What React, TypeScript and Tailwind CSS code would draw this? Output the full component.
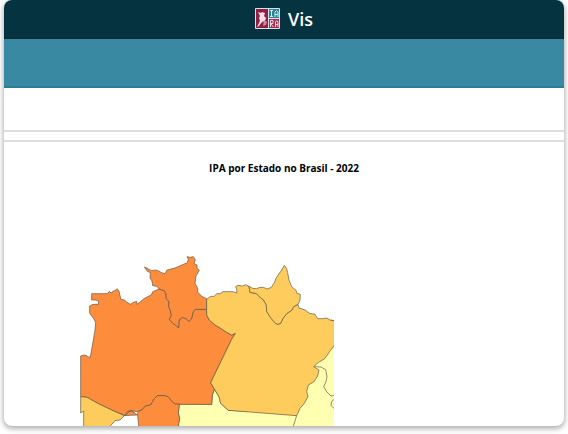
function Logo() {
  return (
    <svg viewBox="0 0 25 21" className="h-[21px] w-[25px]" aria-hidden="true">
      <rect width="25" height="21" rx="1" fill="#d5e3e6" />
      <rect x="1" y="1" width="12" height="19" fill="#8f1f43" />
      <path d="M3 4l3 1 1-1 3 1-1 3 2 2-1 3-3 1-3 4-2 1 3-6-1-3 1-2z" fill="#f0dfe4" />
      <path d="M9 12l3 2-1 3-3 1z" fill="#c98a9c" />
      <rect x="14" y="1" width="10" height="9" fill="#2d8194" />
      <path d="M15 2.500h3M16.500 2.500v6M15 8.500h3M20 9V4l1.500-1.500L23 4v5M20 6.500h3" stroke="#d5e9ed" fill="none" />
      <rect x="14" y="11" width="10" height="9" fill="#a3304e" />
      <path d="M15.500 19v-6.500h2.500v3h-2.500l3 3.500M20.500 19v-5l1.200-1.500L23 14v5M20.500 16.500H23" stroke="#eed5dc" fill="none" />
    </svg>
  );
}

function StateMap() {
  return (
    <svg
      viewBox="15 0 760 528"
      preserveAspectRatio="xMinYMin meet"
      className="block h-44 w-[254px] overflow-hidden"
      role="img"
      aria-label="IPA por Estado no Brasil - 2022"
    >
      <g stroke="#5d5140" strokeOpacity="0.65" strokeWidth="3" strokeLinejoin="round">
        {/* Mato Grosso, Tocantins and Maranhão */}
        <path
          fill="#ffffb2"
          d="M313 462L410 463 412 435 418 418 432 440 437 460 460 481 640 490 690 400 690 340 740 310 785 270V540H313L310 520 314 506 310 490Z"
        />
        {/* Amazonas */}
        <path
          fill="#fd8d3c"
          d="M17 318L26 315 36 317 40 321 46 321 55 270 60 240 62 218 57 207 44 190V168L54 163H70L71 153 61 150H50V131H98L103 124 108 129 114 124 121 121 126 116 132 123 134 133 138 148 148 150 156 157 166 163 176 157 185 154 186 163 196 155 207 146 220 139 229 135 233 125 252 117 268 122 273 132 274 147 282 154 281 169 286 181 289 197 283 208 294 220 311 233 312 210 323 202 333 206 342 214 350 205 354 187 361 178H395V195L403 210 420 225 437 235 455 247 470 255 481 250 470 268 407 398 418 418 412 435 410 463H313L301 462 293 457 280 441 270 437H247L238 446 227 465 211 468 202 479 187 485 168 482 151 497 110 480 70 461 36 442 17 440Z"
        />
        {/* Roraima */}
        <path
          fill="#fd8d3c"
          d="M208 51L217 55 229 62 245 60 260 68 270 71 276 60 288 57 300 54 314 48 325 43 337 38 340 28 336 20 345 22 355 20 361 29 357 41 366 45 366 55 373 61 363 78 360 100 368 115 368 126 380 139 395 146V178H361L354 187 350 205 342 214 333 206 323 202 312 210 311 233 294 220 283 208 289 197 286 181 281 169 282 154 274 147 273 132 268 122 252 117 246 109 233 107 231 93 225 84 226 68 217 64Z"
        />
        {/* Pará */}
        <path
          fill="#fecc5c"
          d="M395 148L407 139 418 139 425 131 435 131 444 125 460 125 474 125 486 129 485 119 482 110 489 106 502 108 511 104 522 109 525 127 545 131 557 144 565 149 574 165 575 184 585 200 599 218 608 223 617 220 624 205 636 190 650 181 656 170 669 163 672 174 690 180 704 190 720 193 728 206 742 206 755 204 765 210 780 212V284L766 302 749 326 731 337 716 350 732 360 728 378 716 396 700 405 695 425 699 440 688 460 675 475 665 497 550 488 460 481 437 460 432 440 407 398 470 268 481 250 470 255 455 247 437 235 420 225 403 210 395 195Z"
        />
        {/* Amapá */}
        <path
          fill="#fecc5c"
          d="M522 109L533 115 545 116 555 112 565 112 577 117 589 112 598 98 603 85 620 60 628 46 635 56 638 68 642 90 650 110 663 121 666 130 676 133 675 151 669 163 656 170 650 181 636 190 624 205 617 220 608 223 599 218 585 200 575 184 574 165 565 149 557 144 545 131 525 127Z"
        />
        {/* Acre */}
        <path
          fill="#fecc5c"
          d="M17 440L36 442 70 461 110 480 148 497 135 510 120 512 104 530H26V483L17 489Z"
        />
        {/* Rondônia */}
        <path
          fill="#fd8d3c"
          d="M151 497L164 483 175 485 185 495 190 485 202 479 211 468 227 465 238 446 247 437H270L280 441 293 457 301 462 313 462 310 490 314 506 310 530H191L188 495 166 496Z"
        />
        <path fill="none" d="M665 497L654 532M768 210L780 214M718 350L738 351 752 359 756 380 753 395 746 410 755 425 768 438 780 436M778 448L770 454 768 466 780 478" />
        <path fill="none" d="M148 497L158 484 170 482 178 490" />
      </g>
    </svg>
  );
}

export default function App() {
  return (
    <div className="bg-white px-1 pb-2 font-['Open_Sans','Noto_Sans',sans-serif]">
      <main className="overflow-hidden rounded-lg bg-white shadow-[0_2px_5px_1px_rgba(0,0,0,0.3)]">
        <header className="flex h-[39px] items-center justify-center gap-2 border-b-2 border-[#052c37] bg-[#053340] text-white">
          <Logo />
          <h1 className="text-lg font-semibold">Vis</h1>
        </header>
        <nav className="h-[49px] border-b-2 border-[#2b7d98] bg-[#3a89a2]" />
        <div className="h-11 border-b-2 border-[#dedede]" />
        <div className="h-[10px] border-b-2 border-[#dedede]" />
        <section>
          <h2 className="pt-[18px] text-center text-[10px] leading-4 font-bold text-black">
            IPA por Estado no Brasil - 2022
          </h2>
          <div className="px-[76px] pt-[74px]">
            <StateMap />
          </div>
        </section>
      </main>
    </div>
  );
}
